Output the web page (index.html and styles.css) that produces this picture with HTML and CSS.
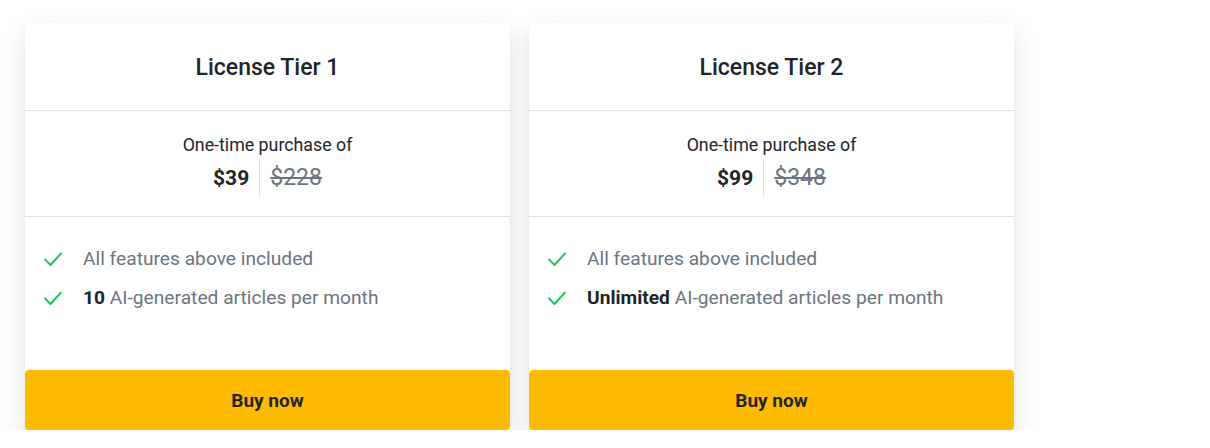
FILE: index.html
```html
<!DOCTYPE html>
<html>
<head>
<meta charset="utf-8">
<link rel="stylesheet" href="styles.css">
</head>
<body>
<div class="plans">
  <div class="card">
    <div class="card-head"><h2 class="title">License Tier 1</h2></div>
    <div class="card-price">
      <div class="lead">One-time purchase of</div>
      <div class="price-row"><span class="now">$39</span><span class="was">$228</span></div>
    </div>
    <ul class="features">
      <li><svg class="check" viewBox="0 0 20 20"><path d="M2 10.5 L7.5 16 L18 4.5" fill="none" stroke="#22c55e" stroke-width="2" stroke-linecap="round" stroke-linejoin="round"/></svg><span>All features above included</span></li>
      <li><svg class="check" viewBox="0 0 20 20"><path d="M2 10.5 L7.5 16 L18 4.5" fill="none" stroke="#22c55e" stroke-width="2" stroke-linecap="round" stroke-linejoin="round"/></svg><span><b>10</b> AI-generated articles per month</span></li>
    </ul>
    <button class="buy">Buy now</button>
  </div>
  <div class="card">
    <div class="card-head"><h2 class="title">License Tier 2</h2></div>
    <div class="card-price">
      <div class="lead">One-time purchase of</div>
      <div class="price-row"><span class="now">$99</span><span class="was">$348</span></div>
    </div>
    <ul class="features">
      <li><svg class="check" viewBox="0 0 20 20"><path d="M2 10.5 L7.5 16 L18 4.5" fill="none" stroke="#22c55e" stroke-width="2" stroke-linecap="round" stroke-linejoin="round"/></svg><span>All features above included</span></li>
      <li><svg class="check" viewBox="0 0 20 20"><path d="M2 10.5 L7.5 16 L18 4.5" fill="none" stroke="#22c55e" stroke-width="2" stroke-linecap="round" stroke-linejoin="round"/></svg><span><b>Unlimited</b> AI-generated articles per month</span></li>
    </ul>
    <button class="buy">Buy now</button>
  </div>
</div>
</body>
</html>
```
FILE: styles.css
```css
* { box-sizing: border-box; }
html, body { margin: 0; padding: 0; background: #fff; }
body { font-family: Roboto, "Liberation Sans", sans-serif; color: #212529; }
.plans {
  display: flex;
  gap: 19px;
  padding: 23px 0 0 25px;
}
.card {
  width: 485px;
  height: 407px;
  background: #fff;
  border-radius: 4px;
  box-shadow: 0 10px 28px rgba(0,0,0,0.11), 0 2px 6px rgba(0,0,0,0.03);
  display: flex;
  flex-direction: column;
}
.card-head {
  height: 88px;
  border-bottom: 1px solid #dee2e6;
  display: flex;
  align-items: center;
  justify-content: center;
}
.title {
  margin: 0;
  font-size: 23px;
  font-weight: 500;
  color: #212529;
  padding-top: 1px;
}
.card-price {
  height: 106px;
  border-bottom: 1px solid #dee2e6;
  display: flex;
  flex-direction: column;
  align-items: center;
  padding-top: 24px;
}
.lead { font-size: 17.8px; color: #212529; line-height: 20px; }
.price-row { display: flex; align-items: center; margin-top: 5px; }
.now { font-size: 21px; font-weight: 700; color: #212529; padding-right: 10px; line-height: 36px; }
.was {
  font-size: 23px;
  color: #6c757d;
  text-decoration: line-through;
  border-left: 1px solid #dee2e6;
  padding-left: 10px;
  line-height: 36px;
}
.features {
  list-style: none;
  margin: 0;
  padding: 31px 0 0 18px;
  flex: 1;
}
.features li {
  display: flex;
  align-items: center;
  font-size: 19.2px;
  color: #6c757d;
  height: 21px;
  margin-bottom: 18px;
}
.features b { color: #212529; font-weight: 700; }
.check { width: 20px; height: 20px; margin-right: 20px; }
.buy {
  height: 60px;
  border: none;
  border-radius: 4px;
  background: #ffbb00;
  color: #212529;
  font-family: Roboto, "Liberation Sans", sans-serif;
  font-weight: 700;
  font-size: 19px;
  padding: 0;
}
```
